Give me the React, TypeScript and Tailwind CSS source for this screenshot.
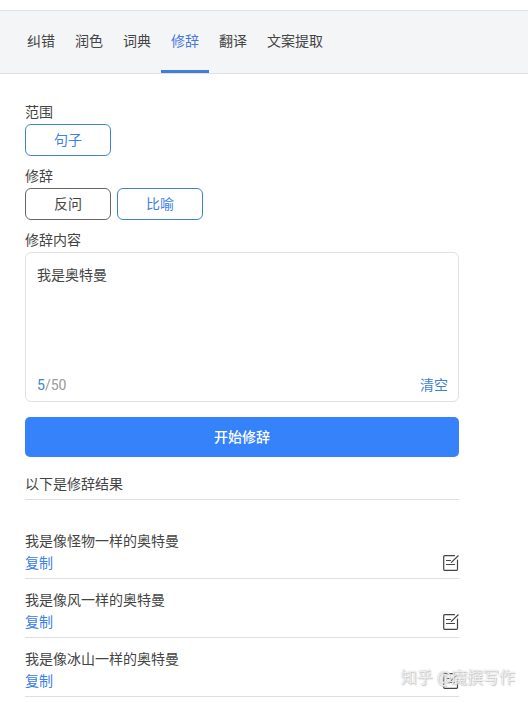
import { useState } from "react";

const tabs = ["纠错", "润色", "词典", "修辞", "翻译", "文案提取"];
const results = ["我是像怪物一样的奥特曼", "我是像风一样的奥特曼", "我是像冰山一样的奥特曼"];
const MAX = 50;

function EditIcon() {
  return (
    <svg viewBox="0 0 16 16" className="size-4" fill="none" stroke="#444" strokeWidth="1.2" strokeLinecap="round" strokeLinejoin="round">
      <path d="M11.5 .7H1.7a1 1 0 0 0-1 1v12.6a1 1 0 0 0 1 1h11.8a1 1 0 0 0 1-1V5" />
      <path d="M15.2 .8 8.4 7.4" />
      <path d="M3.5 5.5h4M3.5 9.5h8" />
    </svg>
  );
}

function Option({ label, active, onClick }: { label: string; active: boolean; onClick?: () => void }) {
  return (
    <button
      type="button"
      aria-pressed={active}
      onClick={onClick}
      className={"h-8 w-[86px] rounded-md border bg-white " + (active ? "border-[#3f82d6] text-[#3c82e6]" : "border-[#666] text-[#444]")}
    >
      {label}
    </button>
  );
}

export default function App() {
  const [tab, setTab] = useState("修辞");
  const [kind, setKind] = useState("比喻");
  const [text, setText] = useState("我是奥特曼");

  return (
    <div className="relative min-h-screen bg-white pt-[10px] font-[Roboto,'Noto_Sans_CJK_SC',sans-serif] text-sm text-[#444]">
      <nav className="flex h-16 border-y border-[#dfe2e5] bg-[#f4f5f7] pl-[17px]">
        {tabs.map((t) => (
          <button
            key={t}
            type="button"
            onClick={() => setTab(t)}
            className={"border-b-3 px-[10px] " + (t === tab ? "border-[#3f7fdb] text-[#4a78e0]" : "border-transparent")}
          >
            {t}
          </button>
        ))}
      </nav>

      <main className="pt-[26px] pr-[69px] pl-[25px]">
        <section className="mb-2">
          <h2 className="leading-6">范围</h2>
          <div className="flex">
            <Option label="句子" active />
          </div>
        </section>

        <section className="mb-2">
          <h2 className="leading-6">修辞</h2>
          <div className="flex gap-[6px]">
            {["反问", "比喻"].map((k) => (
              <Option key={k} label={k} active={k === kind} onClick={() => setKind(k)} />
            ))}
          </div>
        </section>

        <label htmlFor="content" className="block leading-6">修辞内容</label>
        <div className="rounded-md border border-[#dfe1e4] pt-[10px] pr-[10px] pb-[5px] pl-[11px]">
          <textarea
            id="content"
            maxLength={MAX}
            value={text}
            onChange={(e) => setText(e.target.value)}
            className="block h-[111px] w-full resize-none leading-6 outline-none"
          />
          <div className="flex justify-between leading-[22px]">
            <span className="text-[#999]">
              <span className="text-[#3f82d6]">{text.length}</span>/{MAX}
            </span>
            <button type="button" onClick={() => setText("")} className="text-[#3c82d6]">清空</button>
          </div>
        </div>

        <button type="button" className="mt-[15px] h-10 w-full rounded-[5px] bg-[#3682fa] font-medium text-white">
          开始修辞
        </button>

        <h2 className="mt-4 mb-5 border-b border-[#dddfe2] pb-1 leading-[22px]">以下是修辞结果</h2>
        <ul>
          {results.map((r) => (
            <li key={r} className="border-b border-[#dddfe2] pt-[10px] pb-1 leading-[22px]">
              <p>{r}</p>
              <div className="flex items-center justify-between">
                <button type="button" className="text-[#3a80ea]">复制</button>
                <button type="button" aria-label="编辑">
                  <EditIcon />
                </button>
              </div>
            </li>
          ))}
        </ul>
      </main>

      <div className="pointer-events-none absolute right-[13px] bottom-3 text-base leading-6 text-white/80 [text-shadow:0_0_1px_#aaa,1px_1px_1px_#ccc]">
        知乎 @魔撰写作
      </div>
    </div>
  );
}
